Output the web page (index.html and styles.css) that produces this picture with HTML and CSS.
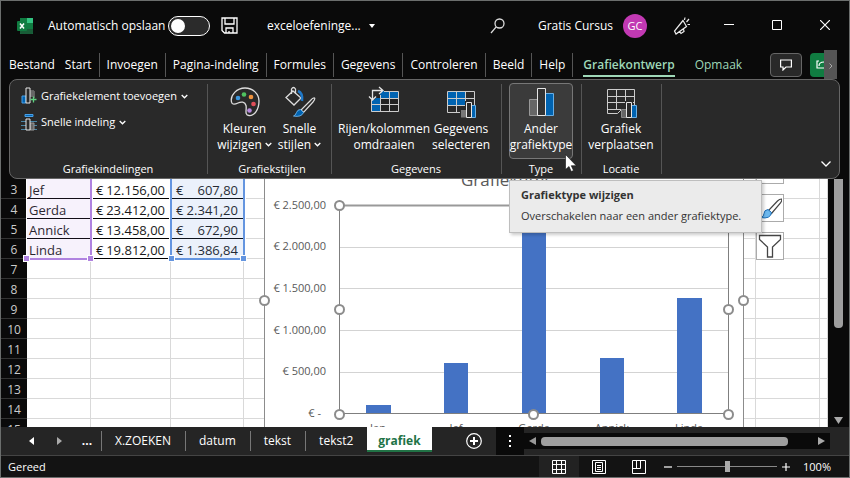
FILE: index.html
```html
<!DOCTYPE html>
<html lang="nl">

<head>
	<meta charset="UTF-8">
	<title>exceloefeningen - Excel</title>
	<link rel="stylesheet" href="styles.css">
</head>

<body>
	<header class="titlebar">
		<svg class="logo" width="16" height="16" viewBox="0 0 16 16">
			<rect x="3" y="0" width="13" height="16" rx="1" fill="#21a366"/>
			<rect x="3" y="0" width="7" height="5" fill="#107c41"/>
			<rect x="10" y="0" width="6" height="5" fill="#33c481"/>
			<rect x="3" y="10" width="13" height="6" rx="1" fill="#185c37"/>
			<rect x="10" y="5" width="6" height="6" fill="#107c41"/>
			<rect x="0" y="3" width="10" height="10" rx="1" fill="#107c41"/>
			<path d="M3 5.500l4 5M7 5.500l-4 5" stroke="#fff" stroke-width="1.500"/>
		</svg>
		<label for="autosave" class="autosave">Automatisch opslaan</label>
		<input type="checkbox" id="autosave" class="switch">
		<button class="iconButton" aria-label="Opslaan">
			<svg width="17" height="17" viewBox="0 0 17 17" fill="none" stroke="#fff" stroke-width="1.300">
				<path d="M1 1h15v15H3.500L1 13.500zM4 1v6h9V1M5 16v-5h7v5M8 16v-2"/>
			</svg>
		</button>
		<button class="fileName">exceloefeninge... <svg width="6" height="4" viewBox="0 0 6 4"><path d="M0 0h6L3 4z" fill="#fff"/></svg></button>
		<button class="iconButton search" aria-label="Zoeken">
			<svg width="16" height="16" viewBox="0 0 16 16" fill="none" stroke="#ddd" stroke-width="1.300">
				<circle cx="9.500" cy="5.500" r="4.500"/><path d="M6.200 8.800L1 15"/>
			</svg>
		</button>
		<span class="account">Gratis Cursus</span>
		<span class="avatar">GC</span>
		<button class="iconButton pen" aria-label="Nieuw">
			<svg width="18" height="18" viewBox="0 0 18 18" fill="none" stroke="#eee" stroke-width="1.200">
				<path d="M10 3.500L1.500 14l1.500 3 10.500-7.500zM6.500 14.500l1.500 2 3-2-.500-2.500M11.500 3l.500-2.500M13.500 5L16 2M14.500 7.500h2.500"/>
			</svg>
		</button>
		<div class="windowButtons">
			<button aria-label="Minimaliseren"><svg width="10" height="10" viewBox="0 0 10 10"><path d="M0 4.500h10" stroke="#fff"/></svg></button>
			<button aria-label="Maximaliseren"><svg width="10" height="10" viewBox="0 0 10 10"><path d="M.500.500h9v9h-9z" fill="none" stroke="#fff"/></svg></button>
			<button aria-label="Sluiten"><svg width="10" height="10" viewBox="0 0 10 10"><path d="M0 0l10 10M10 0L0 10" stroke="#fff" stroke-width="1.200"/></svg></button>
		</div>
	</header>

	<nav class="menu">
		<a href="#" class="first">Bestand</a>
		<a href="#">Start</a>
		<a href="#">Invoegen</a>
		<a href="#">Pagina-indeling</a>
		<a href="#">Formules</a>
		<a href="#">Gegevens</a>
		<a href="#">Controleren</a>
		<a href="#">Beeld</a>
		<a href="#">Help</a>
		<a href="#" class="context active">Grafiekontwerp</a>
		<a href="#" class="context">Opmaak</a>
		<div class="menuRight">
			<button class="comment" aria-label="Opmerkingen">
				<svg width="12" height="12" viewBox="0 0 12 12" fill="none" stroke="#fff" stroke-width="1.200"><path d="M.600 1h10.800v7H6l-3 3V8H.600z"/></svg>
			</button>
			<button class="share" aria-label="Delen">
				<svg width="8" height="10" viewBox="0 0 8 10" fill="none" stroke="#fff" stroke-width="1.200"><path d="M3 2H1v7h7M3 7c0-3 2-4 5-4"/></svg>
			</button>
			<button class="more" aria-label="Meer tabbladen">
				<svg width="4" height="6" viewBox="0 0 4 6"><path d="M.500.500L3 3 .500 5.500" fill="none" stroke="#aaa"/></svg>
			</button>
		</div>
	</nav>

	<section class="ribbon">
		<div class="group layouts">
			<div class="commands stacked">
				<button class="small">
					<svg width="16" height="18" viewBox="0 0 16 18">
						<path d="M1 9h4v7H1z" fill="#0063b1" stroke="#4aa0e6"/>
						<path d="M9 4h4v7" fill="#777" stroke="#999"/>
						<path d="M9 4h4v6H9z" fill="#666"/>
						<path d="M5 1h4v15H5z" fill="#292929" stroke="#e6e6e6"/>
						<path d="M12.500 9.500v6M9.500 12.500h6" stroke="#5fd07f" stroke-width="1.300"/>
					</svg>
					Grafiekelement toevoegen
					<svg class="chevron" width="7" height="5" viewBox="0 0 7 5"><path d="M.700 1l2.800 2.800L6.300 1"/></svg>
				</button>
				<button class="small">
					<svg width="16" height="18" viewBox="0 0 16 18">
						<path d="M4 1.500h8v2H4z" fill="#0063b1" stroke="#4aa0e6"/>
						<path d="M0 8.500h16M0 12.500h16M0 16.500h16" stroke="#4a86a8"/>
						<path d="M9 10h4v7H9z" fill="#666" stroke="#999"/>
						<path d="M5 6h4v11H5z" fill="#292929" stroke="#e6e6e6"/>
					</svg>
					Snelle indeling
					<svg class="chevron" width="7" height="5" viewBox="0 0 7 5"><path d="M.700 1l2.800 2.800L6.300 1"/></svg>
				</button>
			</div>
			<div class="groupName">Grafiekindelingen</div>
		</div>
		<div class="group styles">
			<div class="commands">
				<button class="big narrow">
					<svg width="32" height="32" viewBox="0 0 32 32">
						<path d="M2.500 16C1 9 8 2 16 2c8 0 14 6 14 13 0 9-5 15-10 14.500-5-.500-2-6-3-10-1-4-5-4-8-2.500-3 1.500-6 2-6.500-1z" fill="none" stroke="#ddd" stroke-width="1.300"/>
						<circle cx="9" cy="12" r="2.300" fill="#3a96dd"/>
						<circle cx="15" cy="8.500" r="2.300" fill="#4fc15f"/>
						<circle cx="22" cy="11" r="2.300" fill="#f0923c"/>
						<circle cx="24.500" cy="18" r="2.300" fill="#e04f5a"/>
						<circle cx="20.500" cy="24.500" r="2.300" fill="#b98ae0"/>
					</svg>
					<span>Kleuren<br>wijzigen <svg class="chevron" width="7" height="5" viewBox="0 0 7 5"><path d="M.700 1l2.800 2.800L6.300 1"/></svg></span>
				</button>
				<button class="big narrow">
					<svg width="32" height="32" viewBox="0 0 32 32" fill="none">
						<path d="M9 5l8 7-7 7-8-7.500zM7.500 8V3q2-3 4 0v5" stroke="#ddd" stroke-width="1.300"/>
						<path d="M14 5q5 2 4 10" stroke="#1f78c8" stroke-width="2.500"/>
						<path d="M30.500 12q-1.500-.500-4 2.500L17 24l2.500 2.500L29 16q2.500-3 1.500-4z" stroke="#ddd" stroke-width="1.200"/>
						<path d="M16.500 23.500q-3 0-4 3t-3 3.500q8 1.500 10-3.500z" fill="#0063b1" stroke="#69afe5"/>
					</svg>
					<span>Snelle<br>stijlen <svg class="chevron" width="7" height="5" viewBox="0 0 7 5"><path d="M.700 1l2.800 2.800L6.300 1"/></svg></span>
				</button>
			</div>
			<div class="groupName">Grafiekstijlen</div>
		</div>
		<div class="group">
			<div class="commands">
				<button class="big wide">
					<svg width="32" height="32" viewBox="0 0 32 32">
						<path d="M3 5h27v21H3z" fill="#222"/>
						<path d="M12 5h18v7H12zM3 12h9v14H3z" fill="#0063b1"/>
						<path d="M3.500 14v11.500h27V5.500H16M3.500 18.500h27M12.500 9v16.500M21.500 5v21M12 12.500h18" fill="none" stroke="#ccc"/>
						<path d="M0 0h13v7L6 14H0z" fill="#292929"/>
						<path d="M4.500 14V4.500H15M11 1l4 3.500L11 8M1 10.500L4.500 14 8 10.500" fill="none" stroke="#e6e6e6" stroke-width="1.300"/>
					</svg>
					<span>Rijen/kolommen<br>omdraaien</span>
				</button>
				<button class="big medium">
					<svg width="32" height="32" viewBox="0 0 32 32">
						<path d="M3 5h18v14H3z" fill="#0063b1"/>
						<path d="M2.500 5.500h27v21h-27zM2.500 12.500h27M2.500 19.500h27M11.500 5v21M20.500 5v21" fill="none" stroke="#ccc"/>
						<path d="M15 22h5v-7h8v4h4v13H15z" fill="#292929"/>
						<path d="M16 24h5v7.500h-5z" fill="#777"/>
						<path d="M26.500 19.500h4v12h-4z" fill="#0063b1" stroke="#69afe5"/>
						<path d="M21.500 16.500h5v15h-5z" fill="#292929" stroke="#e6e6e6"/>
					</svg>
					<span>Gegevens<br>selecteren</span>
				</button>
			</div>
			<div class="groupName">Gegevens</div>
		</div>
		<div class="group">
			<div class="commands">
				<button class="big medium hover" aria-describedby="tip">
					<svg width="32" height="32" viewBox="0 0 32 32">
						<path d="M4.500 13.500h8v16h-8z" fill="#666" stroke="#999"/>
						<path d="M20.500 7.500h8v22h-8z" fill="#0063b1" stroke="#69afe5"/>
						<path d="M12.500 2.500h8v27h-8z" fill="#333" stroke="#e6e6e6"/>
					</svg>
					<span>Ander<br>grafiektype</span>
				</button>
				<svg class="cursor" width="12" height="18" viewBox="0 0 12 18"><path d="M.500.500v15l3.500-3 2.200 5 2.300-1-2.200-4.800h5z" fill="#fff" stroke="#111" stroke-width=".600"/></svg>
				<div class="tooltip" id="tip" role="tooltip">
					<b>Grafiektype wijzigen</b>
					<p>Overschakelen naar een ander grafiektype.</p>
				</div>
			</div>
			<div class="groupName">Type</div>
		</div>
		<div class="group">
			<div class="commands">
				<button class="big medium">
					<svg width="32" height="32" viewBox="0 0 32 32">
						<path d="M2.500 3.500h27v20h-13l-4 4h-10zM2.500 10.500h27M2.500 16.500h27M2.500 23.500h14M11.500 3v20M20.500 3v20" fill="none" stroke="#ccc"/>
						<path d="M16 22h4v-7h8v4h4v13H16z" fill="#292929"/>
						<path d="M16.500 23.500h5v8h-5z" fill="#666" stroke="#888"/>
						<path d="M26.500 19.500h5v12h-5z" fill="#0063b1" stroke="#69afe5"/>
						<path d="M21.500 16.500h5v15h-5z" fill="#292929" stroke="#e6e6e6"/>
					</svg>
					<span>Grafiek<br>verplaatsen</span>
				</button>
			</div>
			<div class="groupName">Locatie</div>
		</div>
		<button class="collapse" aria-label="Lint samenvouwen">
			<svg width="10" height="6" viewBox="0 0 10 6"><path d="M.500.500L5 5 9.500.500" fill="none" stroke="#fff" stroke-width="1.300"/></svg>
		</button>
	</section>

	<main class="workspace">
		<div class="sheet">
			<table>
				<colgroup>
					<col class="colHead"><col class="colName"><col class="colSales"><col class="colBonus">
					<col class="col"><col class="col"><col class="col"><col class="col"><col class="col"><col class="col"><col class="col"><col class="col"><col class="col"><col>
				</colgroup>
				<tbody>
					<tr class="data"><th>3</th><td>Jef</td><td><div class="money"><span>€</span><span>12.156,00</span></div></td><td><div class="money"><span>€</span><span>607,80</span></div></td><td></td><td></td><td></td><td></td><td></td><td></td><td></td><td></td><td></td><td></td></tr>
					<tr class="data"><th>4</th><td>Gerda</td><td><div class="money"><span>€</span><span>23.412,00</span></div></td><td><div class="money"><span>€</span><span>2.341,20</span></div></td><td></td><td></td><td></td><td></td><td></td><td></td><td></td><td></td><td></td><td></td></tr>
					<tr class="data"><th>5</th><td>Annick</td><td><div class="money"><span>€</span><span>13.458,00</span></div></td><td><div class="money"><span>€</span><span>672,90</span></div></td><td></td><td></td><td></td><td></td><td></td><td></td><td></td><td></td><td></td><td></td></tr>
					<tr class="data"><th>6</th><td>Linda</td><td><div class="money"><span>€</span><span>19.812,00</span></div></td><td><div class="money"><span>€</span><span>1.386,84</span></div></td><td></td><td></td><td></td><td></td><td></td><td></td><td></td><td></td><td></td><td></td></tr>
					<tr><th>7</th><td></td><td></td><td></td><td></td><td></td><td></td><td></td><td></td><td></td><td></td><td></td><td></td><td></td></tr>
					<tr><th>8</th><td></td><td></td><td></td><td></td><td></td><td></td><td></td><td></td><td></td><td></td><td></td><td></td><td></td></tr>
					<tr><th>9</th><td></td><td></td><td></td><td></td><td></td><td></td><td></td><td></td><td></td><td></td><td></td><td></td><td></td></tr>
					<tr><th>10</th><td></td><td></td><td></td><td></td><td></td><td></td><td></td><td></td><td></td><td></td><td></td><td></td><td></td></tr>
					<tr><th>11</th><td></td><td></td><td></td><td></td><td></td><td></td><td></td><td></td><td></td><td></td><td></td><td></td><td></td></tr>
					<tr><th>12</th><td></td><td></td><td></td><td></td><td></td><td></td><td></td><td></td><td></td><td></td><td></td><td></td><td></td></tr>
					<tr><th>13</th><td></td><td></td><td></td><td></td><td></td><td></td><td></td><td></td><td></td><td></td><td></td><td></td><td></td></tr>
					<tr><th>14</th><td></td><td></td><td></td><td></td><td></td><td></td><td></td><td></td><td></td><td></td><td></td><td></td><td></td></tr>
					<tr><th>15</th><td></td><td></td><td></td><td></td><td></td><td></td><td></td><td></td><td></td><td></td><td></td><td></td><td></td></tr>
				</tbody>
			</table>
			<div class="range names"></div>
			<div class="range values"></div>

			<svg class="chart" width="490" height="270" viewBox="0 0 490 270">
				<rect x="5.500" y="-20" width="479" height="300" fill="#fff" stroke="#8c8c8c"/>
				<text x="202" y="7" class="chartTitle">Grafiektitel</text>
				<path d="M81 68.500h388M81 109.500h388M81 151.500h388M81 193.500h388" stroke="#d3d3d3"/>
				<g class="axis">
					<text x="67" y="30">€ 2.500,00</text>
					<text x="67" y="71">€ 2.000,00</text>
					<text x="67" y="113">€ 1.500,00</text>
					<text x="67" y="155">€ 1.000,00</text>
					<text x="67" y="196">€ 500,00</text>
					<text x="62" y="238">€ -</text>
				</g>
				<g fill="#4472c4">
					<rect x="107" y="226" width="25" height="8"/>
					<rect x="185" y="184" width="24" height="50"/>
					<rect x="263" y="39" width="24" height="195"/>
					<rect x="341" y="179" width="24" height="55"/>
					<rect x="418" y="119" width="25" height="115"/>
				</g>
				<path d="M80.500 27v207.500h389V27" fill="none" stroke="#7f7f7f"/>
				<path d="M80 26.500h390" stroke="#999" stroke-width="2"/>
				<g class="categories">
					<text x="119" y="253">Jan</text>
					<text x="197" y="253">Jef</text>
					<text x="275" y="253">Gerda</text>
					<text x="353" y="253">Annick</text>
					<text x="430" y="253">Linda</text>
				</g>
				<g fill="#fff" stroke="#8c8c8c" stroke-width="2">
					<circle cx="5.500" cy="121.500" r="4.500"/>
					<circle cx="484.500" cy="121.500" r="4.500"/>
					<circle cx="80.500" cy="26.500" r="4.500"/>
					<circle cx="80.500" cy="130.500" r="4.500"/>
					<circle cx="80.500" cy="235.500" r="4.500"/>
					<circle cx="274.500" cy="235.500" r="4.500"/>
					<circle cx="469.500" cy="130.500" r="4.500"/>
					<circle cx="469.500" cy="235.500" r="4.500"/>
				</g>
			</svg>

			<div class="chartTools">
				<button aria-label="Grafiekelementen"><svg width="20" height="20" viewBox="0 0 20 20"><path d="M10 2v16M2 10h16" stroke="#444" stroke-width="2"/></svg></button>
				<button aria-label="Grafiekstijlen">
					<svg width="24" height="24" viewBox="0 0 24 24">
						<path d="M23.500 3q-2 0-4 2L10.500 14.500l3 3L22.500 7q2-3 1-4z" fill="#fff" stroke="#444" stroke-width="1.200"/>
						<path d="M10 13.500q-4 .500-4 4t-3.500 4q10 2 11-5z" fill="#6cb8ee" stroke="#1e6fb8"/>
					</svg>
				</button>
				<button aria-label="Grafiekfilters">
					<svg width="24" height="24" viewBox="0 0 24 24"><path d="M1.500 1.500h21v4L14.500 13v10h-5V13l-8-7.500z" fill="#fff" stroke="#444" stroke-width="1.300"/></svg>
				</button>
			</div>
		</div>
		<div class="scrollV">
			<div class="thumbV"></div>
			<svg width="9" height="7" viewBox="0 0 9 7"><path d="M0 0h9L4.500 7z" fill="#aaa"/></svg>
		</div>
	</main>

	<div class="sheetBar">
		<button class="arrow" aria-label="Vorig blad"><svg width="5" height="8" viewBox="0 0 5 8"><path d="M5 0v8L0 4z" fill="#fff"/></svg></button>
		<button class="arrow" aria-label="Volgend blad"><svg width="5" height="8" viewBox="0 0 5 8"><path d="M0 0v8l5-4z" fill="#aaa"/></svg></button>
		<button class="arrow dots">...</button>
		<a href="#" class="tab">X.ZOEKEN</a>
		<a href="#" class="tab">datum</a>
		<a href="#" class="tab">tekst</a>
		<a href="#" class="tab">tekst2</a>
		<a href="#" class="tab current">grafiek</a>
		<button class="addSheet" aria-label="Nieuw blad"><svg width="16" height="16" viewBox="0 0 16 16" fill="none" stroke="#fff"><circle cx="8" cy="8" r="7.300" stroke-width="1.200"/><path d="M8 4v8M4 8h8" stroke-width="2"/></svg></button>
		<div class="splitter"><svg width="2" height="12" viewBox="0 0 2 12"><path d="M0 0h2v2H0zM0 5h2v2H0zM0 10h2v2H0z" fill="#fff"/></svg></div>
		<div class="scrollH">
			<svg width="7" height="8" viewBox="0 0 7 8"><path d="M7 0v8L0 4z" fill="#999"/></svg>
			<div class="track"><div class="thumbH"></div></div>
			<svg width="7" height="8" viewBox="0 0 7 8"><path d="M0 0v8l7-4z" fill="#aaa"/></svg>
		</div>
	</div>

	<footer class="status">
		<span class="ready">Gereed</span>
		<button class="view on" aria-label="Normaal"><svg width="14" height="14" viewBox="0 0 14 14" fill="none" stroke="#fff"><path d="M.500.500h13v13H.500zM.500 4.500h13M.500 9.500h13M4.500.500v13M9.500.500v13"/></svg></button>
		<button class="view" aria-label="Pagina-indeling"><svg width="14" height="14" viewBox="0 0 14 14" fill="none" stroke="#fff"><path d="M.500.500h13v13H.500zM3.500 2.500h7v9h-7zM5 5.500h4M5 7.500h4M5 9.500h4"/></svg></button>
		<button class="view" aria-label="Pagina-eindevoorbeeld"><svg width="14" height="14" viewBox="0 0 14 14" fill="none" stroke="#fff"><path d="M.500.500h13v13H.500zM.500 8.500h8V.500M4.500.500v8"/></svg></button>
		<button class="zoomButton" aria-label="Uitzoomen"><svg width="8" height="8" viewBox="0 0 8 8"><path d="M0 4h8" stroke="#fff" stroke-width="1.200"/></svg></button>
		<input type="range" class="zoom" min="0" max="100" value="50" aria-label="Zoomen">
		<button class="zoomButton" aria-label="Inzoomen"><svg width="8" height="8" viewBox="0 0 8 8"><path d="M0 4h8M4 0v8" stroke="#fff" stroke-width="1.200"/></svg></button>
		<span class="percent">100%</span>
	</footer>
</body>

</html>
```
FILE: styles.css
```css
* {
	box-sizing: border-box;
}
body {
	margin: 0;
	height: 100vh;
	display: flex;
	flex-direction: column;
	overflow: hidden;
	border: 1px solid #6b6e6d;
	background: #0a0a0a;
	color: #fff;
	font-family: "Open Sans", "Noto Sans", sans-serif;
	font-size: 12px;
	line-height: 16px;
}
button {
	margin: 0;
	padding: 0;
	border: 0;
	background: none;
	color: inherit;
	font: inherit;
}
a {
	color: inherit;
	text-decoration: none;
}
svg {
	flex: none;
}

/* title bar */
.titlebar {
	display: flex;
	align-items: center;
	height: 49px;
	padding-left: 16px;
	white-space: nowrap;
}
.autosave {
	width: 135px;
	padding-left: 15px;
}
.switch {
	appearance: none;
	width: 42px;
	height: 20px;
	margin: 0 11px 0 0;
	padding: 2px;
	border: 1px solid #fff;
	border-radius: 10px;
	background: #2b2b2b;
}
.switch::before {
	content: "";
	display: block;
	width: 14px;
	height: 14px;
	border-radius: 50%;
	background: #fff;
}
.iconButton,
.fileName {
	display: flex;
	align-items: center;
}
.fileName {
	gap: 8px;
	margin-left: 29px;
}
.search {
	margin-left: auto;
}
.account {
	margin-left: 32px;
}
.avatar {
	width: 24px;
	height: 24px;
	margin-left: 10px;
	border-radius: 50%;
	background: #c239b3;
	font-size: 11px;
	line-height: 24px;
	text-align: center;
}
.pen {
	margin-left: 26px;
}
.windowButtons {
	display: flex;
	margin-left: 14px;
}
.windowButtons button {
	width: 48px;
	height: 32px;
}

/* menu */
.menu {
	display: flex;
	align-items: center;
	height: 29px;
	white-space: nowrap;
}
.menu a {
	height: 24px;
	padding: 0 7px;
	line-height: 24px;
	border-right: 1px solid #555;
}
.menu .first {
	padding-left: 8px;
	padding-right: 3px;
	border: 0;
}
.menu .context {
	margin-left: 10px;
	padding: 0;
	border: 0;
	color: #9fd8b8;
}
.menu .context + .context {
	margin-left: 20px;
}
.menu .active {
	border-bottom: 2px solid #9fd8b8;
	font-weight: 600;
}
.menuRight {
	display: flex;
	align-items: center;
	height: 29px;
	margin-left: auto;
	margin-right: 12px;
}
.comment {
	display: grid;
	place-items: center;
	width: 32px;
	height: 24px;
	margin-right: 8px;
	border: 1px solid #666;
	border-radius: 4px;
	background: #292929;
}
.share {
	width: 14px;
	height: 24px;
	border-radius: 4px 0 0 4px;
	background: #107c41;
	text-align: right;
}
.more {
	width: 13px;
	height: 29px;
	background: #555;
}

/* ribbon */
.ribbon {
	position: relative;
	z-index: 2;
	display: flex;
	height: 100px;
	margin: 0 9px 0 8px;
	padding: 4px 0;
	border: 1px solid #666;
	border-radius: 8px;
	background: #292929;
}
.group {
	display: flex;
	flex-direction: column;
	justify-content: space-between;
	padding: 0 8px 0 7px;
	border-right: 1px solid #555;
}
.layouts {
	width: 198px;
}
.styles {
	padding: 0 4px 0 9px;
}
.groupName {
	font-size: 11px;
	line-height: 10px;
	text-align: center;
}
.commands {
	position: relative;
	display: flex;
	margin-top: -1px;
}
.stacked {
	flex-direction: column;
	gap: 8px;
	padding: 4px;
}
.small {
	display: flex;
	align-items: center;
	gap: 4px;
	height: 18px;
	font-size: 11px;
	white-space: nowrap;
}
.chevron {
	fill: none;
	stroke: #fff;
	stroke-width: 1.3;
	vertical-align: 2px;
}
.big {
	display: flex;
	flex-direction: column;
	align-items: center;
	gap: 3px;
	height: 76px;
	padding-top: 2px;
	border: 1px solid transparent;
	border-radius: 4px;
	line-height: 16px;
	font-size: 12px;
	white-space: nowrap;
}
.narrow {
	width: 55px;
}
.medium {
	width: 64px;
}
.wide {
	width: 90px;
}
.hover {
	border-color: #777;
	background: #3b3b3b;
}
.cursor {
	position: absolute;
	z-index: 3;
	left: 56px;
	top: 71px;
}
.tooltip {
	position: absolute;
	left: 0;
	top: 97px;
	padding: 6px 20px 8px 11px;
	border: 1px solid #bebebe;
	background: #ebebeb;
	color: #333;
	font-size: 11px;
	white-space: nowrap;
	box-shadow: 2px 2px 3px rgba(0, 0, 0, 0.2);
}
.tooltip p {
	margin: 5px 0 0;
}
.collapse {
	align-self: flex-end;
	margin: 0 8px 3px auto;
}

/* sheet */
.workspace {
	flex: 1;
	min-height: 0;
	display: flex;
}
.sheet {
	flex: 1;
	position: relative;
	overflow: hidden;
	background: #fff;
	color: #1a1a1a;
}
table {
	width: 100%;
	table-layout: fixed;
	border-collapse: separate;
	border-spacing: 0;
}
.colHead {
	width: 26px;
}
.colName {
	width: 64px;
}
.colSales {
	width: 80px;
}
.colBonus {
	width: 73px;
}
.col {
	width: 64px;
}
th,
td {
	height: 20px;
	padding: 3px 0 0;
	border-bottom: 1px solid #d9d9d9;
	line-height: 16px;
}
td {
	padding: 3px 5px 0 2px;
	border-right: 1px solid #d9d9d9;
	font-size: 13px;
}
th {
	border-color: #333;
	background: #0a0a0a;
	color: #ccc;
	font-weight: 400;
}
.data td:nth-child(-n+4) {
	border-bottom-color: #000;
}
.money {
	display: flex;
	justify-content: space-between;
	padding-left: 3px;
}
.range {
	position: absolute;
	top: -10px;
	height: 91px;
	border: 2px solid;
	outline: 1px solid #fff;
}
.range::before,
.range::after {
	content: "";
	position: absolute;
	right: -4px;
	bottom: -4px;
	width: 5px;
	height: 5px;
	border: 1px solid #fff;
	box-sizing: content-box;
}
.range::before {
	right: auto;
	left: -4px;
}
.names {
	left: 26px;
	width: 65px;
	border-color: #b083e0;
	border-left-width: 0;
	background: rgba(176, 131, 224, 0.1);
}
.names::before,
.names::after {
	background: #b083e0;
}
.values {
	left: 169px;
	width: 75px;
	border-color: #6495e0;
	background: rgba(100, 149, 224, 0.13);
}
.values::before,
.values::after {
	background: #6495e0;
}

/* chart floats on the sheet */
.chart {
	position: absolute;
	left: 258px;
	top: 0;
	font-family: "Open Sans", sans-serif;
	font-size: 11px;
	fill: #595959;
}
.chartTitle {
	font-size: 17px;
}
.axis {
	text-anchor: end;
}
.categories {
	text-anchor: middle;
}
.chartTools {
	position: absolute;
	left: 755px;
	top: -23px;
	display: flex;
	flex-direction: column;
	gap: 10px;
}
.chartTools button {
	display: grid;
	place-items: center;
	width: 28px;
	height: 28px;
	border: 1px solid #ababab;
	background: #fff;
}

/* scrollbars */
.scrollV {
	width: 21px;
	display: flex;
	flex-direction: column;
	align-items: center;
	justify-content: space-between;
	padding-bottom: 3px;
}
.thumbV {
	width: 9px;
	height: 61%;
	border-radius: 0 0 4px 4px;
	background: #9f9f9f;
}
.scrollH {
	flex: 1;
	display: flex;
	align-items: center;
	gap: 5px;
	height: 16px;
	margin-right: 19px;
	padding: 0 5px;
	background: #0a0a0a;
}
.track {
	flex: 1;
}
.thumbH {
	width: 91%;
	height: 9px;
	border-radius: 4px;
	background: #9f9f9f;
}

/* sheet tabs */
.sheetBar {
	display: flex;
	align-items: center;
	height: 28px;
	padding-left: 16px;
	background: #252525;
	white-space: nowrap;
}
.arrow {
	width: 28px;
	height: 20px;
}
.dots {
	font-weight: 700;
}
.tab {
	height: 20px;
	padding: 0 14px 0 13px;
	border-left: 1px solid #777;
	line-height: 20px;
}
.current {
	align-self: flex-start;
	height: 25px;
	padding: 0 11px;
	border-left: 0;
	border-bottom: 2px solid #217346;
	background: #fff;
	color: #217346;
	font-weight: 700;
	line-height: 28px;
}
.addSheet {
	display: flex;
	margin: 0 14px 0 34px;
}
.splitter {
	display: grid;
	place-items: center;
	width: 28px;
	height: 28px;
	background: #0a0a0a;
}

/* status bar */
.status {
	display: flex;
	align-items: center;
	height: 22px;
	padding: 0 18px 0 7px;
	border-top: 1px solid #444;
	background: #131313;
	font-size: 11px;
}
.ready {
	margin-right: auto;
}
.view {
	display: grid;
	place-items: center;
	width: 40px;
	height: 21px;
}
.on {
	background: #222;
}
.zoomButton {
	display: flex;
	margin: 0 5px;
}
.zoom {
	appearance: none;
	width: 100px;
	height: 12px;
	margin: 0;
	background: linear-gradient(#888, #888) center / 100% 1px no-repeat;
}
.zoom::-webkit-slider-thumb {
	appearance: none;
	width: 5px;
	height: 11px;
	background: #aaa;
}
.percent {
	margin-left: 8px;
}
```
